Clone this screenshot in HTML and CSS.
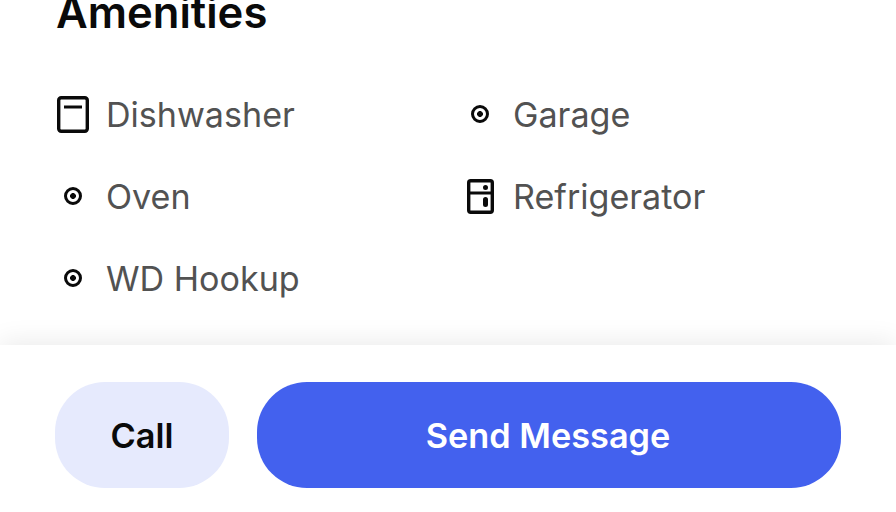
FILE: index.html
```html
<!DOCTYPE html>
<html lang="en">
<head>
  <meta charset="UTF-8">
  <title>Amenities</title>
  <link rel="stylesheet" href="styles.css">
</head>
<body>
  <main class="content">
    <h2>Amenities</h2>
    <ul class="amenities">
      <li>
        <span class="icon">
          <svg width="32" height="37" viewBox="0 0 32 37" fill="none" stroke="#0a0a0a" stroke-width="3.4">
            <rect x="1.7" y="1.7" width="28.6" height="33.6" rx="2.5"/>
            <path d="M7 11h18" stroke-width="3"/>
          </svg>
        </span>
        Dishwasher
      </li>
      <li>
        <span class="icon"><span class="dot"></span></span>
        Garage
      </li>
      <li>
        <span class="icon"><span class="dot"></span></span>
        Oven
      </li>
      <li>
        <span class="icon">
          <svg width="27" height="35" viewBox="0 0 27 35" fill="none" stroke="#0a0a0a" stroke-width="3.4">
            <rect x="1.7" y="1.7" width="23.6" height="31.6" rx="2"/>
            <path d="M1.7 14h23.6" stroke-width="3"/>
            <path d="M18.5 8.5v.1M18.5 20.5v5" stroke-width="5" stroke-linecap="round"/>
          </svg>
        </span>
        Refrigerator
      </li>
      <li>
        <span class="icon"><span class="dot"></span></span>
        WD Hookup
      </li>
    </ul>
  </main>

  <footer class="actions">
    <button class="btn btn-call">Call</button>
    <button class="btn btn-message">Send Message</button>
  </footer>
</body>
</html>
```

FILE: styles.css
```css
html,
body {
  height: 100%;
}

body {
  margin: 0;
  background: #fff;
  font-family: Inter, "Noto Sans", sans-serif;
  display: flex;
  flex-direction: column;
  overflow: hidden;
}

.content {
  height: 345px;
  flex: none;
  padding: 0 56px 47px;
  box-sizing: border-box;
  display: flex;
  flex-direction: column;
  justify-content: flex-end;
  overflow: hidden;
}

h2 {
  margin: 0 0 59px;
  font-size: 43.6px;
  line-height: 44px;
  font-weight: 600;
  color: #0a0a0a;
}

.amenities {
  list-style: none;
  margin: 0;
  padding: 0;
  display: grid;
  grid-template-columns: 407px 1fr;
  row-gap: 42px;
}

.amenities li {
  display: flex;
  align-items: center;
  gap: 16px;
  height: 40px;
  font-size: 34.1px;
  color: #525252;
}

.icon {
  width: 34px;
  flex: none;
  display: flex;
  align-items: center;
  justify-content: center;
}

.dot {
  width: 18px;
  height: 18px;
  box-sizing: border-box;
  border: 3.5px solid #0a0a0a;
  border-radius: 50%;
  background: radial-gradient(circle, #0a0a0a 0 2.6px, #fff 3.2px);
}

.actions {
  flex: 1;
  display: flex;
  gap: 28px;
  padding: 37px 55px 24px;
  background: #fff;
  box-shadow: 0 -4px 24px rgba(0, 0, 0, 0.08);
}

.btn {
  height: 106px;
  border: none;
  border-radius: 50px;
  font-family: inherit;
  font-size: 34.3px;
  font-weight: 600;
}

.btn-call {
  width: 174px;
  background: #e6eafd;
  color: #0a0a0a;
}

.btn-message {
  flex: 1;
  padding-right: 8px;
  background: #4361ee;
  color: #fff;
}
```
